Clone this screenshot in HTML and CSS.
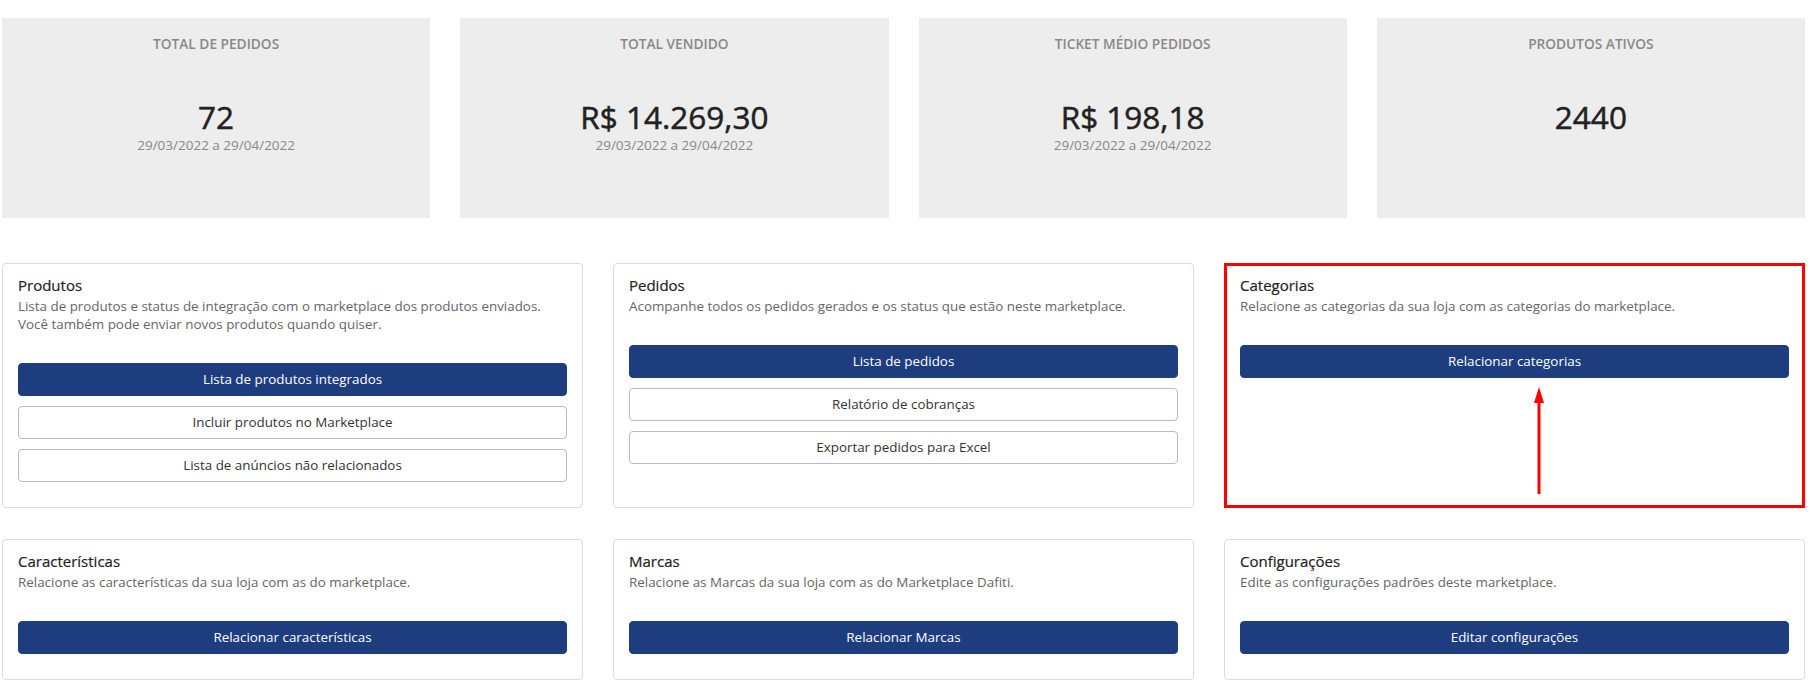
FILE: index.html
```html
<!DOCTYPE html>
<html lang="pt-BR">
<head>
  <meta charset="UTF-8" />
  <meta name="viewport" content="width=device-width, initial-scale=1.0" />
  <title>Marketplace Dafiti</title>
  <link rel="stylesheet" href="styles.css">
</head>
<body>
  <div class="page">
    <section class="stats">
      <div class="stat">
        <p class="stat-label">Total de pedidos</p>
        <p class="stat-value">72</p>
        <p class="stat-period">29/03/2022 a 29/04/2022</p>
      </div>
      <div class="stat">
        <p class="stat-label">Total vendido</p>
        <p class="stat-value">R$ 14.269,30</p>
        <p class="stat-period">29/03/2022 a 29/04/2022</p>
      </div>
      <div class="stat">
        <p class="stat-label">Ticket médio pedidos</p>
        <p class="stat-value">R$ 198,18</p>
        <p class="stat-period">29/03/2022 a 29/04/2022</p>
      </div>
      <div class="stat">
        <p class="stat-label">Produtos ativos</p>
        <p class="stat-value">2440</p>
      </div>
    </section>

    <section class="panels">
      <div class="panel">
        <h3>Produtos</h3>
        <p>Lista de produtos e status de integração com o marketplace dos produtos enviados.<br>Você também pode enviar novos produtos quando quiser.</p>
        <a class="btn btn-primary" href="#">Lista de produtos integrados</a>
        <a class="btn" href="#">Incluir produtos no Marketplace</a>
        <a class="btn" href="#">Lista de anúncios não relacionados</a>
      </div>

      <div class="panel">
        <h3>Pedidos</h3>
        <p>Acompanhe todos os pedidos gerados e os status que estão neste marketplace.</p>
        <a class="btn btn-primary" href="#">Lista de pedidos</a>
        <a class="btn" href="#">Relatório de cobranças</a>
        <a class="btn" href="#">Exportar pedidos para Excel</a>
      </div>

      <div class="panel highlight">
        <h3>Categorias</h3>
        <p>Relacione as categorias da sua loja com as categorias do marketplace.</p>
        <a class="btn btn-primary" href="#">Relacionar categorias</a>
        <svg class="arrow" width="12" height="108" viewBox="0 0 12 108">
          <line x1="6" y1="107" x2="6" y2="12" stroke="#f00" stroke-width="3" />
          <polygon points="1,16 6,0 11,16" fill="#f00" />
        </svg>
      </div>

      <div class="panel">
        <h3>Características</h3>
        <p>Relacione as características da sua loja com as do marketplace.</p>
        <a class="btn btn-primary" href="#">Relacionar características</a>
      </div>

      <div class="panel">
        <h3>Marcas</h3>
        <p>Relacione as Marcas da sua loja com as do Marketplace Dafiti.</p>
        <a class="btn btn-primary" href="#">Relacionar Marcas</a>
      </div>

      <div class="panel">
        <h3>Configurações</h3>
        <p>Edite as configurações padrões deste marketplace.</p>
        <a class="btn btn-primary" href="#">Editar configurações</a>
      </div>
    </section>
  </div>
</body>
</html>
```

FILE: styles.css
```css
* {
  box-sizing: border-box;
  margin: 0;
  padding: 0;
}

body {
  background-color: #fff;
  font-family: "Open Sans", "Liberation Sans", sans-serif;
  color: #333;
}

.page {
  padding: 18px 14px 0 2px;
}

/* cards de resumo */
.stats {
  display: grid;
  grid-template-columns: repeat(4, 1fr);
  gap: 30px;
  margin-bottom: 45px;
}

.stat {
  background-color: #ededed;
  height: 200px;
  padding-top: 17px;
  text-align: center;
}

.stat-label {
  font-size: 13.7px;
  line-height: 18px;
  font-weight: 600;
  color: #888;
  text-transform: uppercase;
}

.stat-value {
  margin-top: 45px;
  font-size: 31.5px;
  line-height: 37px;
  font-weight: 500;
  color: #222;
  -webkit-text-stroke: 0.5px #222;
}

.stat-period {
  font-size: 13.5px;
  line-height: 20px;
  color: #888;
}

/* blocos de ações */
.panels {
  display: grid;
  grid-template-columns: repeat(3, 1fr);
  gap: 31px 30px;
}

.panel {
  position: relative;
  border: 1px solid #ddd;
  border-radius: 4px;
  padding: 11px 15px 15px;
  background-color: #fff;
}

.panel h3 {
  font-size: 15px;
  line-height: 20px;
  font-weight: 500;
  color: #222;
  margin-bottom: 2px;
  -webkit-text-stroke: 0.2px #222;
}

.panel p {
  font-size: 13.4px;
  line-height: 18px;
  color: #666;
  margin-bottom: 30px;
}

.btn {
  display: block;
  height: 33px;
  line-height: 31px;
  margin-bottom: 10px;
  border: 1px solid #bbb;
  border-radius: 4px;
  background-color: #fff;
  color: #333;
  font-size: 13.4px;
  text-align: center;
  text-decoration: none;
}

.btn-primary {
  background-color: #1e3d7e;
  border-color: #1e3d7e;
  color: #fff;
}

/* marcação em vermelho */
.highlight::after {
  content: "";
  position: absolute;
  top: -1px;
  left: -1px;
  right: -1px;
  bottom: -1px;
  border: 3px solid #f00;
  pointer-events: none;
}

.arrow {
  position: absolute;
  left: 308px;
  top: 123px;
}
```
